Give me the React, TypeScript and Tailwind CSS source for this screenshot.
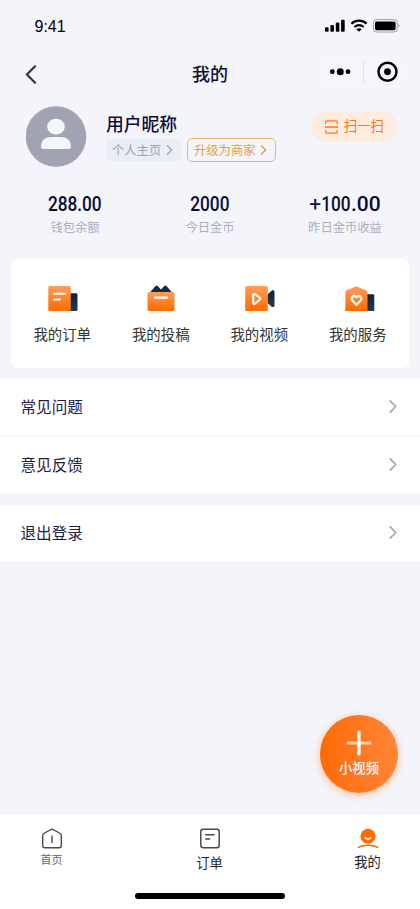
import React from 'react';

const ChevronIcon: React.FC<{ className?: string; strokeWidth?: number }> = ({
  className = '',
  strokeWidth = 1.5,
}) => (
  <svg viewBox="0 0 8 14" fill="none" stroke="currentColor" strokeWidth={strokeWidth} className={className}>
    <path d="M1 1l6 6-6 6" strokeLinecap="round" strokeLinejoin="round" />
  </svg>
);

const Gradients = () => (
  <svg className="absolute size-0" aria-hidden>
    <defs>
      <linearGradient id="orange" x1="0" y1="0" x2="0" y2="1">
        <stop offset="0" stopColor="#ff9d57" />
        <stop offset="1" stopColor="#ff6a00" />
      </linearGradient>
      <linearGradient id="navy" x1="0" y1="0" x2="0" y2="1">
        <stop offset="0" stopColor="#142035" />
        <stop offset="1" stopColor="#233a5c" />
      </linearGradient>
    </defs>
  </svg>
);

const OrderIcon = () => (
  <svg width="30" height="26" viewBox="0 0 30 26">
    <path d="M21 7.3h7a1.5 1.5 0 0 1 1.5 1.5v14.7a1.5 1.5 0 0 1-1.5 1.5h-7z" fill="url(#navy)" />
    <rect x="0.3" y="0" width="22.5" height="25" rx="1.6" fill="url(#orange)" />
    <path d="M6 7.7h11.3M6 13.4h6" stroke="#fff" strokeWidth="2" strokeLinecap="round" />
  </svg>
);

const PostIcon = () => (
  <svg width="28" height="27" viewBox="0 0 28 27">
    <path
      d="M2.5 8L8.3 1.2a1.7 1.7 0 0 1 2.6 0L14 4.6l3.1-3.4a1.7 1.7 0 0 1 2.6 0L25.5 8z"
      fill="#182943"
    />
    <rect x="0.5" y="7" width="27" height="19" rx="1.8" fill="url(#orange)" />
    <path d="M8 12.6h12" stroke="#fff" strokeWidth="2.2" strokeLinecap="round" />
  </svg>
);

const VideoIcon = () => (
  <svg width="30" height="26" viewBox="0 0 30 26">
    <path d="M22.5 8.5l4.2-3.8c1.2-.8 2.8-.2 2.8 1.3v13.5c0 1.5-1.6 2-2.8 1.3L22.5 17z" fill="url(#navy)" />
    <rect x="0.2" y="0" width="22.6" height="25" rx="1.6" fill="url(#orange)" />
    <path
      d="M8.2 9.2c0-1.2 1-1.7 1.9-1l4.8 3.7c.7.5.7 1.3 0 1.8l-4.8 3.8c-.9.7-1.9.1-1.9-1z"
      fill="none"
      stroke="#fff"
      strokeWidth="2.2"
    />
  </svg>
);

const ServiceIcon = () => (
  <svg width="30" height="26" viewBox="0 0 30 26" className="ml-[3px]">
    <path d="M22 8.2h6a1.3 1.3 0 0 1 1.3 1.3V25H22z" fill="url(#navy)" />
    <path
      d="M.3 6.3c0-1 .5-1.6 1.3-2L10.2.7c.8-.3 1.4-.3 2.2 0L21 4.3c.9.4 1.5 1 1.5 2V25H.3z"
      fill="url(#orange)"
    />
    <path
      d="M11.5 19l-4.1-4.4c-2.3-3.1 1.5-6.2 4.1-3.4 2.6-2.8 6.4.3 4.1 3.4z"
      fill="none"
      stroke="#fff"
      strokeWidth="2.2"
      strokeLinejoin="round"
    />
  </svg>
);

const StatusBar = () => (
  <div className="flex h-[52px] justify-between pl-[34.5px] pr-[20px]">
    <span className="pt-[15px] font-['Liberation_Sans',sans-serif] text-[16px] leading-6 text-black">9:41</span>
    <div className="flex items-start gap-[5px] pt-[19px]">
      <svg width="20" height="13" viewBox="0 0 20 13">
        <rect x="0" y="8.3" width="3.6" height="4.5" rx="1.2" />
        <rect x="5.4" y="6" width="3.6" height="6.8" rx="1.2" />
        <rect x="10.8" y="3.6" width="3.6" height="9.2" rx="1.2" />
        <rect x="16.1" y="0.8" width="3.6" height="12" rx="1.2" />
      </svg>
      <svg width="18" height="13" viewBox="0 0 18 13" fill="none" stroke="#000">
        <path d="M1.4 4.7c4.4-4 10.8-4 15.2 0" strokeWidth="2.2" />
        <path d="M4.3 8c2.8-2.3 6.6-2.3 9.4 0" strokeWidth="2.1" />
        <path d="M6.3 10.2c1.5-1.3 3.9-1.3 5.4 0L9 12.8z" fill="#000" stroke="none" />
      </svg>
      <svg width="27" height="14" viewBox="0 0 27 14">
        <rect x="0.4" y="0.6" width="23.9" height="12.4" rx="3.2" fill="none" stroke="#000" strokeOpacity="0.4" strokeWidth="0.9" />
        <rect x="2" y="2.4" width="20.6" height="8.8" rx="1.6" />
        <path d="M25.5 4.6c1.3.7 1.3 3.7 0 4.4z" fillOpacity="0.4" />
      </svg>
    </div>
  </div>
);

const NavBar = () => (
  <header className="grid h-[44px] grid-cols-3 items-center pl-[25px] pr-[9px]">
    <ChevronIcon className="h-[19px] w-[12px] rotate-180 text-[#333]" strokeWidth={1.6} />
    <h1 className="-ml-4 -mt-0.5 text-center text-[18px] font-medium text-[#0b0d35]">我的</h1>
    <div className="mb-[5px] flex h-[36px] w-[97px] items-center justify-self-end rounded-full border border-[#f3f4f9] bg-[#f5f6fb]">
      <svg width="48" height="24" viewBox="0 0 48 24">
        <circle cx="17.3" cy="11.7" r="2.4" />
        <circle cx="25.3" cy="11.7" r="3.5" />
        <circle cx="33" cy="11.7" r="2.4" />
      </svg>
      <span className="h-[22px] w-px bg-[#dfe0e6]" />
      <svg width="46" height="24" viewBox="0 0 46 24">
        <circle cx="23.5" cy="11.7" r="9" fill="none" stroke="#000" strokeWidth="2.5" />
        <circle cx="23.5" cy="11.7" r="3.4" />
      </svg>
    </div>
  </header>
);

const Profile = () => (
  <section className="flex h-[71px] pl-[26px] pr-[23px] pt-[10px]">
    <svg width="61" height="61" viewBox="0 0 61 61" className="shrink-0">
      <circle cx="30" cy="30.5" r="30.3" fill="#a2a3b2" />
      <ellipse cx="30" cy="20.7" rx="8.8" ry="7.9" fill="#f5f6fb" />
      <path d="M15 40.3c0-6 4.5-9.3 10-9.3h10c5.5 0 10 3.3 10 9.3 0 1.7-1 2.6-2.7 2.6H17.7c-1.7 0-2.7-.9-2.7-2.6z" fill="#f5f6fb" />
    </svg>
    <div className="ml-[19px] flex-1 pt-[4px]">
      <h2 className="text-[17.8px] font-medium leading-[26px] text-[#0b0d35]">用户昵称</h2>
      <div className="mt-[2px] flex items-center gap-[6px] text-[12.3px]">
        <span className="flex h-[22px] w-[75px] items-center justify-between rounded bg-[#e9edf6] pl-[6px] pr-[8px] text-[#9fa1b0]">
          个人主页
          <ChevronIcon className="h-[10px] w-[7px]" strokeWidth={1.7} />
        </span>
        <span className="flex h-[24px] w-[89px] items-center justify-between rounded-[5px] border border-[#ebb866] pl-[6px] pr-[8px] text-[#e2a13c]">
          升级为商家
          <ChevronIcon className="h-[10px] w-[7px]" strokeWidth={1.9} />
        </span>
      </div>
    </div>
    <button className="mt-[5px] flex h-[31px] w-[86px] items-center gap-[6px] rounded-full bg-[#ffecdf] pl-[14px] text-[13.3px] text-[#ff7518]">
      <svg width="13" height="14" viewBox="0 0 13 14" fill="none" stroke="currentColor" strokeWidth="1.3" className="shrink-0">
        <path d="M.7 4V2.2Q.7.8 2 .8h9q1.3 0 1.3 1.4V4M0 7h13M.7 10v1.8q0 1.4 1.3 1.4h9q1.3 0 1.3-1.4V10" />
      </svg>
      <span className="-mt-px whitespace-nowrap">扫一扫</span>
    </button>
  </section>
);

const stats = [
  { value: <span className="inline-block scale-x-[0.82]">288.00</span>, label: '钱包余额' },
  { value: <span className="inline-block scale-x-[0.82]">2000</span>, label: '今日金币' },
  {
    value: (
      <>
        <span className="font-normal">+</span>
        <span className="-mx-[3px] inline-block scale-x-[0.82]">100</span>
        <span>.00</span>
      </>
    ),
    label: '昨日金币收益',
  },
];

const menu = [
  { icon: <OrderIcon />, label: '我的订单' },
  { icon: <PostIcon />, label: '我的投稿' },
  { icon: <VideoIcon />, label: '我的视频' },
  { icon: <ServiceIcon />, label: '我的服务' },
];

const ListRow: React.FC<{ label: string }> = ({ label }) => (
  <div className="flex h-[56px] items-center justify-between bg-white pl-[20.5px] pr-[23px] text-[15.6px] text-[#1f2048]">
    {label}
    <ChevronIcon className="mb-[2px] h-[13px] w-[8px] text-[#a2a3b2]" strokeWidth={1.7} />
  </div>
);

const TabBar = () => (
  <nav className="flex h-[94px] shrink-0 flex-col items-center justify-between bg-white pb-[10px] pt-[13px]">
    <div className="flex w-full justify-between px-[32px] text-[#222]">
      <div className="flex w-10 flex-col items-center">
        <svg width="20" height="21" viewBox="0 0 20 21" fill="none" stroke="#4a4a4a" strokeWidth="1.4" className="-ml-px">
          <path d="M.7 7.2c0-.8.3-1.3 1-1.7l7.3-4q1-.5 2 0l7.3 4c.7.4 1 .9 1 1.7v10.5q0 2-2 2H2.700q-2 0-2-2z" />
          <path d="M10 7.5v7.5" />
        </svg>
        <span className="-ml-px text-[11px] leading-5 text-[#666]">首页</span>
      </div>
      <div className="flex w-10 flex-col items-center">
        <svg width="20" height="21" viewBox="0 0 20 21" fill="none" stroke="#4a4a4a" strokeWidth="1.5">
          <rect x="0.8" y="1.3" width="18.4" height="18.4" rx="2.5" />
          <path d="M5.2 6.7h9.3M5.2 11h5" />
        </svg>
        <span className="-ml-px mt-[4px] text-[13.3px] leading-5">订单</span>
      </div>
      <div className="flex w-10 flex-col items-center">
        <svg width="22" height="21" viewBox="0 0 22 21" fill="none" strokeLinecap="round" className="-ml-px">
          <circle cx="11" cy="8.2" r="7.5" fill="#ff6a00" />
          <path d="M8.2 9.8q2.8 2.6 5.6 0" stroke="#fff" strokeWidth="1.5" />
          <path d="M1.2 19.3q9.8-4 19.6 0" stroke="#ff6a00" strokeWidth="1.5" />
        </svg>
        <span className="-ml-px mt-[3px] text-[13.3px] leading-5">我的</span>
      </div>
    </div>
    <div className="h-[6px] w-[150px] rounded-full bg-black" />
  </nav>
);

export default function App() {
  return (
    <div className="relative flex h-[909px] w-[420px] flex-col overflow-hidden bg-[#f4f5fb] font-['Noto_Sans_CJK_SC',sans-serif]">
      <Gradients />
      <StatusBar />
      <NavBar />
      <Profile />

      <section className="mt-[23px] grid h-[69px] grid-cols-3 px-[7.5px] text-center">
        {stats.map((item) => (
          <div key={item.label} className="whitespace-nowrap">
            <div className="font-['Roboto',sans-serif] text-[21px] font-medium leading-[28px] text-[#0b0d35]">{item.value}</div>
            <div className="text-[12.3px] leading-[18px] text-[#adaebc]">{item.label}</div>
          </div>
        ))}
      </section>

      <section className="mx-[11px] grid h-[109px] shrink-0 grid-cols-4 rounded-[6px] bg-white px-[2px] pt-[26px]">
        {menu.map((item) => (
          <div key={item.label} className="flex flex-col items-center">
            <div className="ml-px flex h-[27px] items-end">{item.icon}</div>
            <span className="mt-[11px] text-[14.4px] leading-[22px] text-[#333]">{item.label}</span>
          </div>
        ))}
      </section>

      <section className="mt-[11px] flex shrink-0 flex-col gap-[2px] bg-[#f8f9fe]">
        <ListRow label="常见问题" />
        <ListRow label="意见反馈" />
      </section>
      <section className="mt-[12px] min-h-0 flex-1">
        <ListRow label="退出登录" />
      </section>

      <TabBar />

      <button className="absolute left-[320px] top-[715px] flex size-[78px] flex-col items-center rounded-full bg-linear-to-r from-[#ff6a00] to-[#ff8534] pt-[15px] text-white shadow-[0_2px_8px_rgba(255,122,32,0.45)]">
        <svg width="26" height="26" viewBox="0 0 26 26" stroke="#fff" strokeLinecap="round">
          <path d="M2 13h22" strokeWidth="3" strokeOpacity="0.65" />
          <path d="M13 2v22" strokeWidth="3.2" />
        </svg>
        <span className="mt-[2px] text-[13.3px] font-medium leading-5">小视频</span>
      </button>
    </div>
  );
}
